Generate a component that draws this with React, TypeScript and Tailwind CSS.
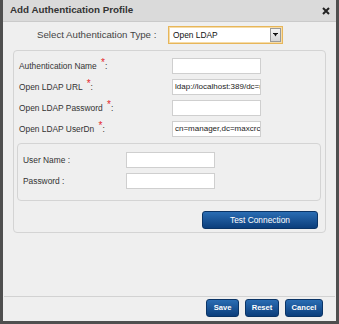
import React from "react";

const FONT = { fontFamily: '"Liberation Sans", Arial, sans-serif' };

function Req() {
  return <span className="relative -top-[3px] ml-[2px] text-[10px] leading-none text-[#e5262b]">*</span>;
}

function Field({ value = "" }: { value?: string }) {
  return (
    <div className="flex h-[16px] w-[89px] shrink-0 items-center overflow-hidden whitespace-nowrap border border-[#cfcfcf] bg-white pl-[2px] text-[8px] text-[#222]">
      {value}
    </div>
  );
}

function Row({ label, req, value, col }: { label: string; req?: boolean; value?: string; col: string }) {
  return (
    <div className="flex h-[16px] items-center">
      <div className={`${col} shrink-0 text-[8.4px] text-[#333]`}>
        {label}
        {req && <Req />}
        {req ? ":" : " :"}
      </div>
      <Field value={value} />
    </div>
  );
}

function BlueButton({ children, className }: { children: React.ReactNode; className: string }) {
  return (
    <button
      type="button"
      className={`flex h-[18px] items-center justify-center rounded-[3px] border border-[#0a3466] bg-gradient-to-b from-[#2a6db3] to-[#0b3e7c] text-white ${className}`}
    >
      {children}
    </button>
  );
}

export default function App() {
  return (
    <div
      style={FONT}
      className="flex h-[324px] w-[339px] flex-col border-x-[3px] border-b-[3px] border-[#4f4f4f] bg-[#efefef]"
    >
      <div className="flex h-[22px] shrink-0 items-center justify-between border-b border-[#cacaca] bg-[#dadada] pl-[7px] pr-[6px]">
        <span className="text-[9.8px] font-bold text-[#333]">Add Authentication Profile</span>
        <svg width="8" height="8" viewBox="0 0 8 8">
          <path d="M1 1L7 7M7 1L1 7" stroke="#222" strokeWidth="2" />
        </svg>
      </div>

      <div className="mt-[4px] flex h-[18px] items-center">
        <div className="w-[165px] shrink-0 pl-[34px] text-[9.7px] text-[#444]">Select Authentication Type :</div>
        <div className="flex h-[18px] w-[115px] items-center justify-between border border-[#e7b65a] bg-white pl-[4px] pr-[1px] shadow-[inset_0_0_0_1px_#f6dca8]">
          <span className="text-[8.4px] text-[#111]">Open LDAP</span>
          <div className="flex h-[14px] w-[11px] items-center justify-center border border-[#9a9a9a] bg-gradient-to-b from-[#f4f4f4] to-[#d6d6d6]">
            <svg width="5" height="4" viewBox="0 0 5 4">
              <path d="M0 0H5V1H4L2.5 3.5L1 1H0Z" fill="#111" />
            </svg>
          </div>
        </div>
      </div>

      <div className="ml-[10px] mt-[6px] flex h-[183px] w-[313px] flex-col rounded-[4px] border border-[#d4d4d4] pt-[7px]">
        <div className="flex flex-col gap-[5px] pl-[5px]">
          <Row col="w-[153px]" label="Authentication Name " req />
          <Row col="w-[153px]" label="Open LDAP URL " req value="ldap://localhost:389/dc=maxcrc,dc=com" />
          <Row col="w-[153px]" label="Open LDAP Password " req />
          <Row col="w-[153px]" label="Open LDAP UserDn " req value="cn=manager,dc=maxcrc,dc=com" />
        </div>

        <div className="ml-[3px] mr-[4px] mt-[6px] flex h-[58px] flex-col gap-[5px] rounded-[4px] border border-[#d4d4d4] pl-[5px] pt-[8px]">
          <Row col="w-[103px]" label="User Name" />
          <Row col="w-[103px]" label="Password" />
        </div>

        <div className="mr-[7px] mt-[10px] flex justify-end">
          <BlueButton className="w-[116px] text-[8.4px]">Test Connection</BlueButton>
        </div>
      </div>

      <div className="mx-[1px] mt-auto flex justify-end gap-[6px] border-t border-[#d2d2d2] pb-[4px] pr-[12px] pt-[2px]">
        <BlueButton className="w-[33px] text-[7.6px] font-bold">Save</BlueButton>
        <BlueButton className="w-[34px] text-[7.6px] font-bold">Reset</BlueButton>
        <BlueButton className="w-[38px] text-[7.6px] font-bold">Cancel</BlueButton>
      </div>
    </div>
  );
}
